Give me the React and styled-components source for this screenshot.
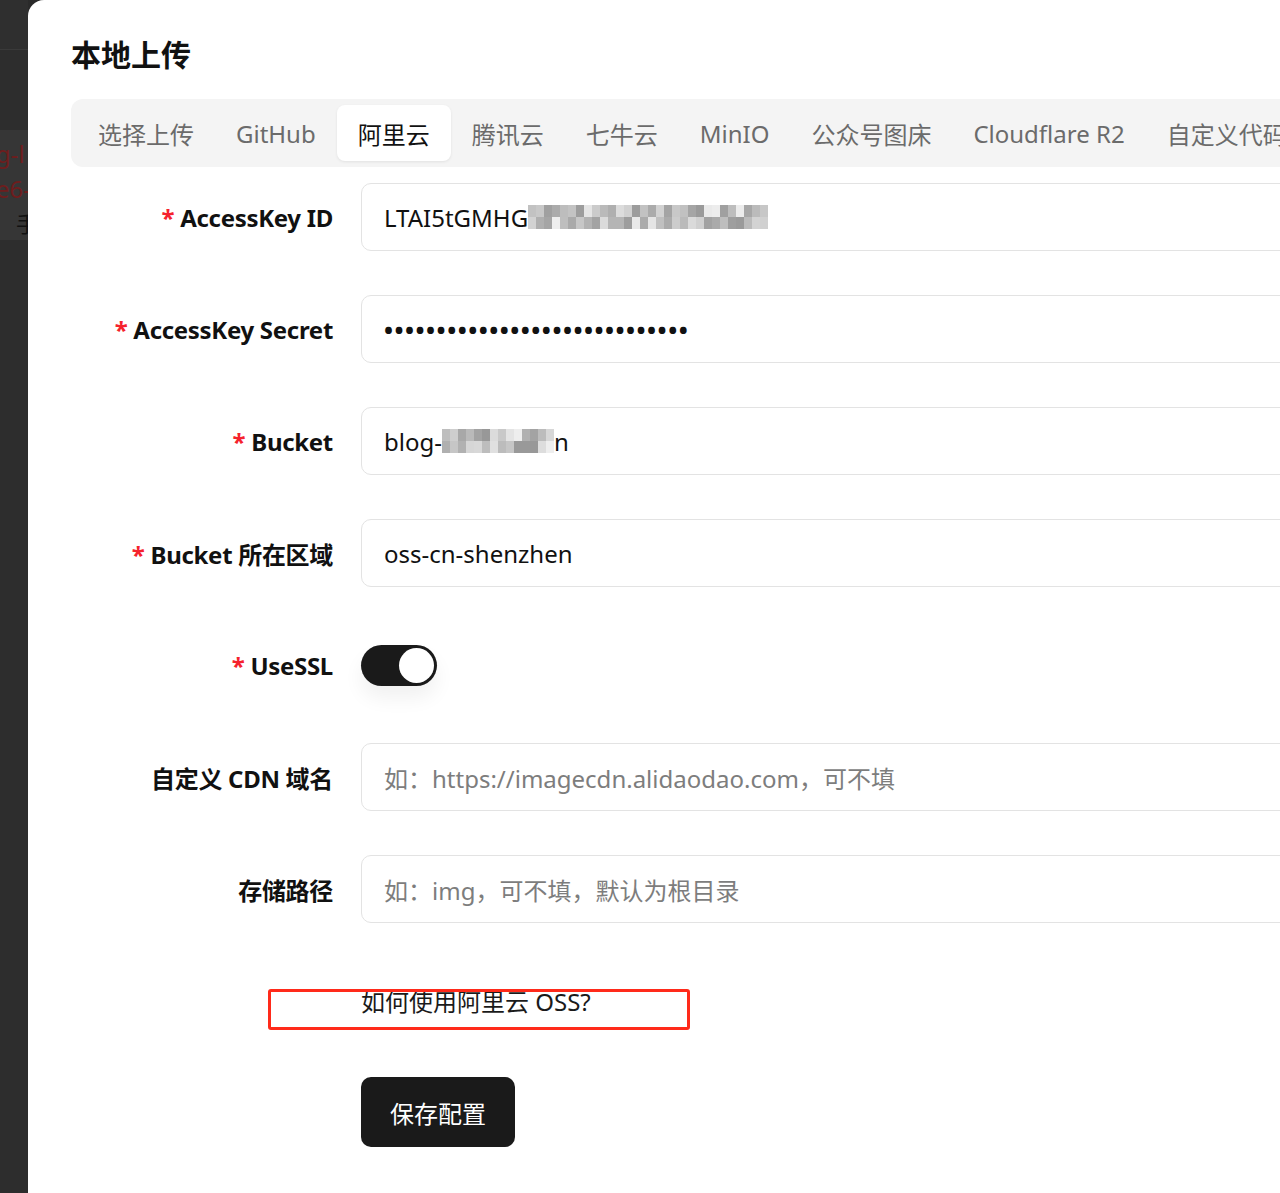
import React from 'react';
import styled, { createGlobalStyle } from 'styled-components';

const GlobalStyle = createGlobalStyle`
  html, body {
    margin: 0;
    padding: 0;
    background: #2a2a2a;
    overflow: hidden;
  }
  * {
    box-sizing: border-box;
  }
`;

const FONT = `"Noto Sans", "Noto Sans CJK SC", sans-serif`;

const tabs = ['选择上传', 'GitHub', '阿里云', '腾讯云', '七牛云', 'MinIO', '公众号图床', 'Cloudflare R2', '自定义代码'];

// pseudo random greys for the blurred parts of the screenshot
const greys = (n, seed) => {
  const out = [];
  let s = seed;
  for (let i = 0; i < n; i++) {
    s = (s * 9301 + 49297) % 233280;
    out.push(150 + Math.floor((s / 233280) * 90));
  }
  return out;
};

const App = () => {
  return (
    <>
      <GlobalStyle />
      <Page>
        <Backdrop>
          <BackdropTop />
          <BackdropRow>
            <RedLine>g-l</RedLine>
            <RedLine>e6-</RedLine>
            <DarkLine>手</DarkLine>
          </BackdropRow>
        </Backdrop>
        <Modal>
          <Title>本地上传</Title>
          <TabBar>
            {tabs.map((t) => (
              <Tab key={t} $active={t === '阿里云'}>
                {t}
              </Tab>
            ))}
          </TabBar>

          <Form>
            <Row>
              <Label $required>AccessKey ID</Label>
              <Field>
                LTAI5tGMHG
                <Mosaic $cols={30}>
                  {greys(60, 7).map((g, i) => (
                    <Cell key={i} style={{ background: `rgb(${g},${g},${g})` }} />
                  ))}
                </Mosaic>
              </Field>
            </Row>
            <Row>
              <Label $required>AccessKey Secret</Label>
              <Field $dots>{'•'.repeat(29)}</Field>
            </Row>
            <Row>
              <Label $required>Bucket</Label>
              <Field>
                blog-
                <Mosaic $cols={14}>
                  {greys(28, 31).map((g, i) => (
                    <Cell key={i} style={{ background: `rgb(${g},${g},${g})` }} />
                  ))}
                </Mosaic>
                n
              </Field>
            </Row>
            <Row>
              <Label $required>Bucket 所在区域</Label>
              <Field>oss-cn-shenzhen</Field>
            </Row>
            <Row>
              <Label $required>UseSSL</Label>
              <Switch>
                <Knob />
              </Switch>
            </Row>
            <Row>
              <Label>自定义 CDN 域名</Label>
              <Field $placeholder>如：https://imagecdn.alidaodao.com，可不填</Field>
            </Row>
            <Row>
              <Label>存储路径</Label>
              <Field $placeholder>如：img，可不填，默认为根目录</Field>
            </Row>
            <Row>
              <Label />
              <HelpLink>
                如何使用阿里云 OSS?
                <Mark />
              </HelpLink>
            </Row>
            <ButtonRow>
              <Label />
              <SaveButton>保存配置</SaveButton>
            </ButtonRow>
          </Form>
        </Modal>
      </Page>
    </>
  );
};

const Page = styled.div`
  display: flex;
  width: 1280px;
  height: 1193px;
  font-family: ${FONT};
`;

const Backdrop = styled.div`
  width: 28px;
  flex-shrink: 0;
  display: flex;
  flex-direction: column;
  overflow: hidden;
  background: #2d2d2d;
`;

const BackdropTop = styled.div`
  height: 50px;
  border-bottom: 1px solid #3a3a3a;
  background: #2f2f2f;
  margin-bottom: 80px;
`;

const BackdropRow = styled.div`
  background: #363636;
  height: 110px;
  padding-top: 6px;
  display: flex;
  flex-direction: column;
  margin-left: -4px;
`;

const RedLine = styled.div`
  font-size: 24px;
  line-height: 35px;
  color: #6e1d1d;
  white-space: nowrap;
`;

const DarkLine = styled.div`
  font-size: 22px;
  line-height: 35px;
  color: #111;
  padding-left: 20px;
`;

const Modal = styled.div`
  flex: 1;
  min-width: 0;
  background: #fff;
  border-top-left-radius: 16px;
  padding: 34px 0 0 43px;
  overflow: hidden;
`;

const Title = styled.h2`
  margin: 0;
  font-size: 30px;
  line-height: 42px;
  font-weight: 700;
  color: #111;
`;

const TabBar = styled.div`
  margin-top: 23px;
  width: 1260px;
  height: 68px;
  padding: 6px;
  background: #f4f4f4;
  border-radius: 12px;
  display: flex;
  align-items: center;
  white-space: nowrap;
`;

const Tab = styled.div`
  height: 56px;
  padding: 0 21px;
  display: flex;
  align-items: center;
  font-size: 24px;
  color: ${(p) => (p.$active ? '#111' : '#6b6b6b')};
  background: ${(p) => (p.$active ? '#fff' : 'transparent')};
  border-radius: 8px;
  box-shadow: ${(p) => (p.$active ? '0 1px 3px rgba(0,0,0,0.08)' : 'none')};
`;

const Form = styled.div`
  margin-top: 16px;
  display: flex;
  flex-direction: column;
  gap: 44px;
`;

const Row = styled.div`
  display: flex;
  align-items: center;
  height: 68px;
  position: relative;
`;

const ButtonRow = styled(Row)`
  height: 70px;
  margin-top: -2px;
`;

const Label = styled.div`
  width: 262px;
  flex-shrink: 0;
  margin-right: 28px;
  text-align: right;
  font-size: 24px;
  font-weight: 700;
  letter-spacing: -0.3px;
  color: #111;
  &::before {
    content: ${(p) => (p.$required ? "'*'" : 'none')};
    color: #f5222d;
    margin-right: 6px;
    font-weight: 700;
  }
`;

const Field = styled.div`
  width: 960px;
  height: 68px;
  flex-shrink: 0;
  border: 1px solid #e3e3e3;
  border-radius: 10px;
  padding: 0 22px;
  display: flex;
  align-items: center;
  font-size: 24px;
  font-weight: ${(p) => (p.$dots ? 700 : 400)};
  letter-spacing: ${(p) => (p.$dots ? '1.5px' : '0')};
  color: ${(p) => (p.$placeholder ? '#7d7d7d' : '#111')};
  white-space: nowrap;
`;

const Mosaic = styled.span`
  display: inline-grid;
  grid-template-columns: repeat(${(p) => p.$cols}, 8px);
  grid-auto-rows: 12px;
`;

const Cell = styled.span`
  display: block;
`;

const Switch = styled.div`
  width: 76px;
  height: 41px;
  border-radius: 21px;
  background: #1a1a1a;
  padding: 3px;
  display: flex;
  justify-content: flex-end;
  box-shadow: 0 12px 20px rgba(0, 0, 0, 0.06);
`;

const Knob = styled.div`
  width: 35px;
  height: 35px;
  border-radius: 50%;
  background: #fff;
`;

const HelpLink = styled.div`
  position: relative;
  font-size: 24px;
  color: #1a1a1a;
  margin-top: -2px;
`;

const Mark = styled.span`
  position: absolute;
  left: -93px;
  top: 6px;
  width: 422px;
  height: 41px;
  border: 3px solid #ff2a1a;
  border-radius: 3px;
`;

const SaveButton = styled.button`
  width: 154px;
  height: 70px;
  border: none;
  border-radius: 10px;
  background: #1a1a1a;
  color: #fff;
  font-family: ${FONT};
  font-size: 24px;
`;

export default App;
